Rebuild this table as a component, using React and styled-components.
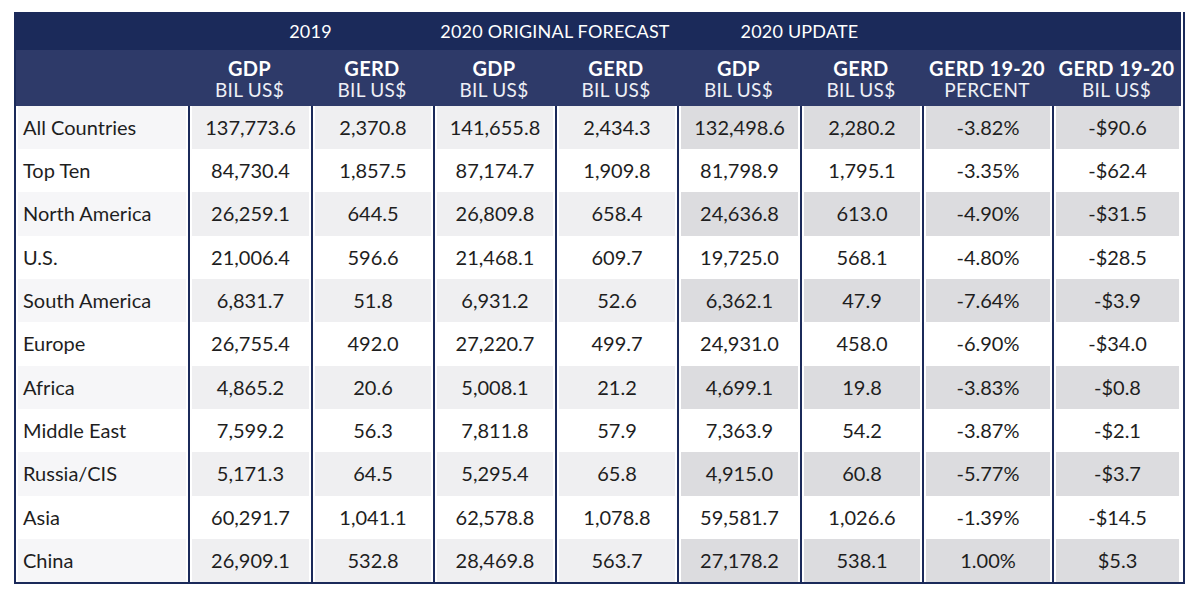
import styled, { createGlobalStyle } from 'styled-components'

const NAVY = '#1b2a5a'

const GlobalStyle = createGlobalStyle`
  body {
    margin: 0;
    background: #ffffff;
    font-family: Lato, "Open Sans", sans-serif;
  }
`

const Page = styled.div`
  padding: 12px 14px;
`

const Table = styled.div`
  width: 1171px;
  border: 2px solid ${NAVY};
  border-top: none;
  box-sizing: border-box;
  display: grid;
  grid-template-columns: 172px 123px 122px 122px 122px 123px 122px 130px 129px;
`

const GroupRow = styled.div`
  grid-column: 1 / -1;
  display: grid;
  grid-template-columns: subgrid;
  height: 38px;
  background: ${NAVY};
  color: #ffffff;
`

const GroupCell = styled.div`
  grid-column: span 2;
  display: flex;
  align-items: center;
  justify-content: center;
  font-size: 18px;
  letter-spacing: 0.2px;
`

const HeadRow = styled.div`
  grid-column: 1 / -1;
  display: grid;
  grid-template-columns: subgrid;
  height: 56px;
  background: #2e3a69;
  color: #ffffff;
`

const HeadCell = styled.div`
  display: flex;
  flex-direction: column;
  align-items: center;
  justify-content: center;
  padding-top: 2px;
  line-height: 21px;
`

const HeadTitle = styled.div`
  font-size: 20px;
  font-weight: 700;
  letter-spacing: 0.3px;
`

const HeadUnit = styled.div`
  font-size: 19px;
  letter-spacing: 0.3px;
  color: #eef0f6;
`

const Cell = styled.div`
  height: ${p => p.$h}px;
  padding: 0 2px 2px;
  background-clip: padding-box;
  background-color: ${p => p.$bg};
  border-left: ${p => (p.$first ? 'none' : `2px solid ${NAVY}`)};
  box-shadow: inset 2px 0 0 #ffffff, inset -2px 0 0 #ffffff;
  display: flex;
  align-items: center;
  justify-content: ${p => (p.$first ? 'flex-start' : 'center')};
  font-size: 20px;
  color: #1e1e1e;
  box-sizing: border-box;
`

const Label = styled.span`
  padding-left: 5px;
`

const groups = ['2019', '2020 ORIGINAL FORECAST', '2020 UPDATE']

const heads = [
  ['GDP', 'BIL US$'],
  ['GERD', 'BIL US$'],
  ['GDP', 'BIL US$'],
  ['GERD', 'BIL US$'],
  ['GDP', 'BIL US$'],
  ['GERD', 'BIL US$'],
  ['GERD 19-20', 'PERCENT'],
  ['GERD 19-20', 'BIL US$'],
]

const rows = [
  ['All Countries', '137,773.6', '2,370.8', '141,655.8', '2,434.3', '132,498.6', '2,280.2', '-3.82%', '-$90.6'],
  ['Top Ten', '84,730.4', '1,857.5', '87,174.7', '1,909.8', '81,798.9', '1,795.1', '-3.35%', '-$62.4'],
  ['North America', '26,259.1', '644.5', '26,809.8', '658.4', '24,636.8', '613.0', '-4.90%', '-$31.5'],
  ['U.S.', '21,006.4', '596.6', '21,468.1', '609.7', '19,725.0', '568.1', '-4.80%', '-$28.5'],
  ['South America', '6,831.7', '51.8', '6,931.2', '52.6', '6,362.1', '47.9', '-7.64%', '-$3.9'],
  ['Europe', '26,755.4', '492.0', '27,220.7', '499.7', '24,931.0', '458.0', '-6.90%', '-$34.0'],
  ['Africa', '4,865.2', '20.6', '5,008.1', '21.2', '4,699.1', '19.8', '-3.83%', '-$0.8'],
  ['Middle East', '7,599.2', '56.3', '7,811.8', '57.9', '7,363.9', '54.2', '-3.87%', '-$2.1'],
  ['Russia/CIS', '5,171.3', '64.5', '5,295.4', '65.8', '4,915.0', '60.8', '-5.77%', '-$3.7'],
  ['Asia', '60,291.7', '1,041.1', '62,578.8', '1,078.8', '59,581.7', '1,026.6', '-1.39%', '-$14.5'],
  ['China', '26,909.1', '532.8', '28,469.8', '563.7', '27,178.2', '538.1', '1.00%', '$5.3'],
]

function shade(rowIdx, colIdx) {
  if (rowIdx % 2 === 1) return '#ffffff'
  if (colIdx === 0) return '#f6f6f8'
  if (colIdx <= 4) return '#efeff1'
  return '#dcdcdf'
}

export default function App() {
  return (
    <>
      <GlobalStyle />
      <Page>
        <Table>
          <GroupRow>
            <div />
            {groups.map(g => (
              <GroupCell key={g}>{g}</GroupCell>
            ))}
          </GroupRow>
          <HeadRow>
            <div />
            {heads.map(([t, u], i) => (
              <HeadCell key={i}>
                <HeadTitle>{t}</HeadTitle>
                <HeadUnit>{u}</HeadUnit>
              </HeadCell>
            ))}
          </HeadRow>
          {rows.map((r, ri) =>
            r.map((v, ci) => (
              <Cell
                key={`${ri}-${ci}`}
                $first={ci === 0}
                $bg={shade(ri, ci)}
                $h={ri % 3 === 2 ? 44 : 43}
              >
                {ci === 0 ? <Label>{v}</Label> : v}
              </Cell>
            ))
          )}
        </Table>
      </Page>
    </>
  )
}
